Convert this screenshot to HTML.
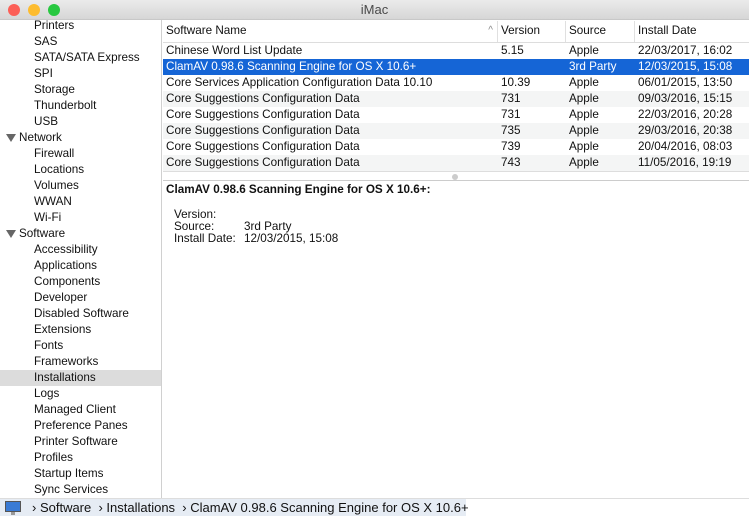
<!DOCTYPE html><html><head><style>
*{margin:0;padding:0;box-sizing:border-box}
body{width:749px;height:516px;overflow:hidden;font-family:"Liberation Sans",sans-serif;font-size:11.7px;color:#111;background:#fff;position:relative}
.t{position:absolute;left:0;top:0;width:749px;height:20px;background:linear-gradient(#ebebeb,#d6d6d6);border-bottom:1px solid #c8c8c8;text-align:center;line-height:20px;font-size:13px;color:#4a4a4a;z-index:2}
.dot{position:absolute;top:4px;width:12px;height:12px;border-radius:50%}
.sb{position:absolute;left:0;top:18px;width:162px;height:480px;border-right:1px solid #d0d0d0;overflow:hidden}
.sb div{height:16px;line-height:16px;white-space:nowrap}
.i{padding-left:34px}.h{padding-left:6px}
.h:before{content:"";display:inline-block;border-left:5px solid transparent;border-right:5px solid transparent;border-top:8px solid #666;margin-right:3px;vertical-align:-1px}
.sel{background:#dcdcdc}
.tb{position:absolute;left:163px;top:21px;width:586px}
.r{height:16px;line-height:16px;position:relative;white-space:nowrap}
.r span{position:absolute;top:0}
.r:nth-child(odd){background:#f4f5f5}
.hd{height:22px;line-height:20px;border-bottom:1px solid #ddd;background:#fff!important;position:relative}
.hd span{position:absolute;top:0;height:21px;border-left:1px solid #e0e0e0;padding-left:3px}
.s{background:#1565d6!important;color:#fff}
.det{position:absolute;left:163px;top:180px;width:586px;border-top:1px solid #ccc}
.bb{position:absolute;left:0;top:498px;width:749px;height:18px;background:#fff;border-top:1px solid #ddd}
</style></head><body>
<div class="t"><span class="dot" style="left:8px;background:#fc5f57"></span><span class="dot" style="left:28px;background:#fdbc2e"></span><span class="dot" style="left:48px;background:#28c840"></span>iMac</div>
<div class="sb">
<div class="i">Printers</div><div class="i">SAS</div><div class="i">SATA/SATA Express</div><div class="i">SPI</div><div class="i">Storage</div><div class="i">Thunderbolt</div><div class="i">USB</div>
<div class="h">Network</div><div class="i">Firewall</div><div class="i">Locations</div><div class="i">Volumes</div><div class="i">WWAN</div><div class="i">Wi-Fi</div>
<div class="h">Software</div><div class="i">Accessibility</div><div class="i">Applications</div><div class="i">Components</div><div class="i">Developer</div><div class="i">Disabled Software</div><div class="i">Extensions</div><div class="i">Fonts</div><div class="i">Frameworks</div><div class="i sel">Installations</div><div class="i">Logs</div><div class="i">Managed Client</div><div class="i">Preference Panes</div><div class="i">Printer Software</div><div class="i">Profiles</div><div class="i">Startup Items</div><div class="i">Sync Services</div>
</div>
<div class="tb">
<div class="hd"><span style="left:0;border:0;width:334px">Software Name<b style="position:absolute;right:4px;font-weight:normal;color:#888;font-size:10px">^</b></span><span style="left:334px">Version</span><span style="left:402px">Source</span><span style="left:471px">Install Date</span></div>
<div class="r"><span style="left:3px">Chinese Word List Update</span><span style="left:338px">5.15</span><span style="left:406px">Apple</span><span style="left:475px">22/03/2017, 16:02</span></div>
<div class="r s"><span style="left:3px">ClamAV 0.98.6 Scanning Engine for OS X 10.6+</span><span style="left:406px">3rd Party</span><span style="left:475px">12/03/2015, 15:08</span></div>
<div class="r"><span style="left:3px">Core Services Application Configuration Data 10.10</span><span style="left:338px">10.39</span><span style="left:406px">Apple</span><span style="left:475px">06/01/2015, 13:50</span></div>
<div class="r"><span style="left:3px">Core Suggestions Configuration Data</span><span style="left:338px">731</span><span style="left:406px">Apple</span><span style="left:475px">09/03/2016, 15:15</span></div>
<div class="r"><span style="left:3px">Core Suggestions Configuration Data</span><span style="left:338px">731</span><span style="left:406px">Apple</span><span style="left:475px">22/03/2016, 20:28</span></div>
<div class="r"><span style="left:3px">Core Suggestions Configuration Data</span><span style="left:338px">735</span><span style="left:406px">Apple</span><span style="left:475px">29/03/2016, 20:38</span></div>
<div class="r"><span style="left:3px">Core Suggestions Configuration Data</span><span style="left:338px">739</span><span style="left:406px">Apple</span><span style="left:475px">20/04/2016, 08:03</span></div>
<div class="r"><span style="left:3px">Core Suggestions Configuration Data</span><span style="left:338px">743</span><span style="left:406px">Apple</span><span style="left:475px">11/05/2016, 19:19</span></div>
</div>
<div style="position:absolute;left:163px;top:171px;width:586px;height:10px;border-top:1px solid #ddd;background:#fff"><div style="position:absolute;left:289px;top:2px;width:6px;height:6px;border-radius:50%;background:#ccc"></div></div>
<div class="det">
<div style="font-weight:bold;position:absolute;left:3px;top:2px">ClamAV 0.98.6 Scanning Engine for OS X 10.6+:</div>
<div style="position:absolute;left:11px;top:28px;line-height:12px">Version:<br>Source:<br>Install Date:</div>
<div style="position:absolute;left:81px;top:40px;line-height:12px">3rd Party<br>12/03/2015, 15:08</div>
</div>
<div class="bb"><div style="position:absolute;left:0;top:0;width:466px;height:17px;background:#e6ecf4"></div>
<svg style="position:absolute;left:5px;top:2px" width="16" height="14"><rect x="0.5" y="0.5" width="15" height="10" fill="#3a7bd5" stroke="#555"/><rect x="6" y="11" width="4" height="3" fill="#999"/></svg>
<div style="position:absolute;left:32px;top:1px;line-height:16px;font-size:13px;white-space:nowrap">› Software &nbsp;› Installations &nbsp;› ClamAV 0.98.6 Scanning Engine for OS X 10.6+</div></div>
</body></html>
